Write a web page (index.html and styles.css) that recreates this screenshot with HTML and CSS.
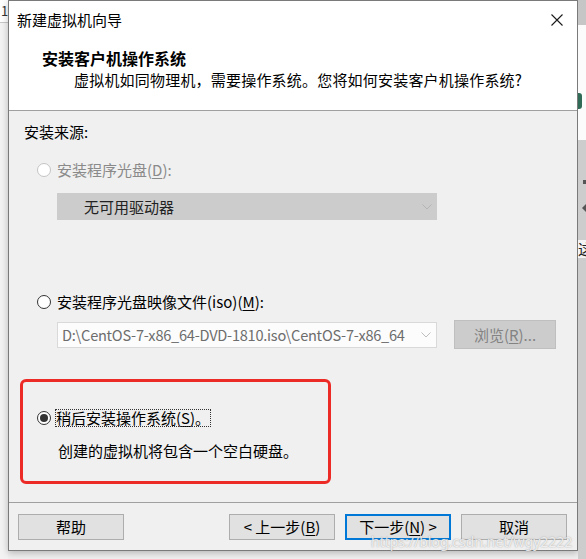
FILE: index.html
```html
<!DOCTYPE html>
<html lang="zh-CN">
<head>
<meta charset="utf-8">
<title>新建虚拟机向导</title>
<link rel="stylesheet" href="styles.css">
</head>
<body>
<div class="screen">
  <div class="side side-left">
    <div class="sl-top"><span class="sl-frag">1</span></div>
    <div class="sl-rest"></div>
  </div>

  <div class="center-col">
    <div class="dialog">
      <div class="titlebar">
        <span class="title">新建虚拟机向导</span>
        <svg class="close" width="12" height="12" viewBox="0 0 12 12"><path d="M0.5 0.5 L11.5 11.5 M11.5 0.5 L0.5 11.5" stroke="#1a1a1a" stroke-width="1.1" fill="none"/></svg>
      </div>
      <div class="header">
        <div class="h-title">安装客户机操作系统</div>
        <div class="h-sub">虚拟机如同物理机，需要操作系统。您将如何安装客户机操作系统?</div>
      </div>
      <div class="body">
        <div class="src-label">安装来源:</div>

        <div class="opt opt-d disabled">
          <span class="radio"></span>
          <span class="opt-text">安装程序光盘(<u>D</u>):</span>
        </div>
        <div class="combo combo-disabled">
          <span class="combo-text">无可用驱动器</span>
          <svg class="chev" width="10" height="6" viewBox="0 0 10 6"><polyline points="0.5,0.5 5,5 9.5,0.5" fill="none" stroke="#b4b4b4" stroke-width="1"/></svg>
        </div>

        <div class="opt opt-m">
          <span class="radio"></span>
          <span class="opt-text">安装程序光盘映像文件(iso)(<u>M</u>):</span>
        </div>
        <div class="iso-row">
          <div class="combo combo-iso">
            <span class="combo-text">D:\CentOS-7-x86_64-DVD-1810.iso\CentOS-7-x86_64</span>
            <svg class="chev" width="10" height="6" viewBox="0 0 10 6"><polyline points="0.5,0.5 5,5 9.5,0.5" fill="none" stroke="#bdbdbd" stroke-width="1"/></svg>
          </div>
          <div class="btn-browse">浏览(<u>R</u>)...</div>
        </div>

        <div class="mark-box">
          <div class="opt opt-s">
            <span class="radio checked"></span>
            <span class="opt-text focus">稍后安装操作系统(<u>S</u>)。</span>
          </div>
          <div class="desc">创建的虚拟机将包含一个空白硬盘。</div>
        </div>
      </div>
      <div class="footer">
        <div class="btn">帮助</div>
        <div class="btn btn-back">&lt; 上一步(<u>B</u>)</div>
        <div class="btn btn-next">下一步(<u>N</u>) &gt;</div>
        <div class="btn">取消</div>
      </div>
    </div>
  </div>

  <div class="side side-right">
    <div class="sr-top"></div>
    <div class="sr-white"><span class="sr-green"></span></div>
    <div class="sr-gray">
      <span class="sr-dot"></span>
      <span class="sr-tri"></span>
      <span class="sr-char">这</span>
    </div>
  </div>

  <div class="watermark">https://blog.csdn.net/wgy2222</div>
</div>
</body>
</html>
```

FILE: styles.css
```css
* { box-sizing: border-box; }

html, body {
  margin: 0;
  padding: 0;
  background: #f0f0f0;
}

body {
  font-family: "Noto Sans CJK SC", "Noto Sans", sans-serif;
  font-size: 15px;
  color: #000;
}

u { text-decoration: underline; text-underline-offset: 2px; }

.screen {
  position: relative;
  width: 586px;
  height: 559px;
  overflow: hidden;
  display: grid;
  grid-template-columns: 8px 570px 8px;
  background: #f0f0f0;
}

/* outside strips (other windows behind the dialog) */
.side { display: flex; flex-direction: column; overflow: hidden; }

.sl-top {
  height: 23px;
  background: #ffffff;
  border-bottom: 1px solid #c8c8c8;
}
.sl-frag {
  display: block;
  font-size: 13px;
  line-height: 13px;
  margin: 4px 0 0 1px;
  color: #333;
}
.sl-rest { flex: 1; background: #f3f3f3; }

.sr-top { height: 25px; background: #c6c6c6; }
.sr-white {
  height: 115px;
  background: #fbfbfb;
  display: flex;
  flex-direction: column;
  padding-top: 68px;
}
.sr-green {
  display: block;
  width: 4px;
  height: 16px;
  background: #2f6b56;
  border-radius: 0 3px 3px 0;
}
.sr-gray {
  flex: 1;
  background: #cdcdcd;
  display: flex;
  flex-direction: column;
  padding-top: 40px;
}
.sr-dot {
  display: block;
  width: 3px;
  height: 4px;
  margin-left: 5px;
  background: #555;
}
.sr-tri {
  display: block;
  width: 0;
  height: 0;
  margin: 20px 0 0 4px;
  border-top: 4px solid transparent;
  border-bottom: 4px solid transparent;
  border-right: 4px solid #555;
}
.sr-char {
  display: block;
  width: 8px;
  margin-top: 28px;
  font-size: 15px;
  line-height: 18px;
  color: #222;
  white-space: nowrap;
  overflow: hidden;
  background: #f4f4f4;
}

.center-col { display: flex; flex-direction: column; }

.dialog {
  width: 570px;
  height: 551px;
  border: 1px solid #7a7a7a;
  background: #f0f0f0;
  display: flex;
  flex-direction: column;
  box-shadow: 0 2px 7px rgba(0, 0, 0, 0.25);
}

.titlebar {
  height: 37px;
  background: #fff;
  display: flex;
  align-items: center;
  justify-content: space-between;
  padding: 1px 14px 0 8px;
}
.title { font-size: 15px; line-height: 20px; }
.close { display: block; margin-top: -1px; }

.header {
  height: 73px;
  background: #fff;
  border-bottom: 1px solid #a0a0a0;
  padding-top: 9px;
}
.h-title {
  font-weight: bold;
  font-size: 16px;
  line-height: 22px;
  padding-left: 33px;
}
.h-sub {
  margin-top: 1px;
  line-height: 20px;
  padding-left: 65px;
  letter-spacing: 0.2px;
}

.body {
  height: 392px;
  border-bottom: 1px solid #a0a0a0;
  display: flex;
  flex-direction: column;
  align-items: flex-start;
}

.src-label {
  margin: 11px 0 0 15px;
  line-height: 20px;
}

.opt {
  display: flex;
  align-items: center;
  height: 20px;
  gap: 6px;
  margin-left: 28px;
  line-height: 20px;
}
.opt-d { margin-top: 18px; }
.opt-m { margin-top: 72px; }
.disabled .opt-text { color: #8a8a8a; }

.radio {
  width: 14px;
  height: 14px;
  border: 1px solid #333;
  border-radius: 50%;
  background: #fff;
  display: flex;
  align-items: center;
  justify-content: center;
  flex: none;
}
.disabled .radio { border-color: #c4c4c4; }
.radio.checked::after {
  content: "";
  width: 8px;
  height: 8px;
  border-radius: 50%;
  background: #333;
}

.combo {
  width: 380px;
  display: flex;
  align-items: center;
  justify-content: space-between;
  flex: none;
}
.combo-disabled {
  height: 27px;
  margin: 13px 0 0 48px;
  background: #cccccc;
  padding: 0 5px 0 27px;
}
.combo-disabled .combo-text { color: #222; }
.chev { display: block; flex: none; }

.iso-row {
  display: flex;
  align-items: center;
  gap: 17px;
  margin: 8px 0 0 48px;
}
.combo-iso {
  height: 26px;
  background: #fcfcfc;
  border: 1px solid #d9d9d9;
  padding: 0 5px 0 4px;
}
.combo-iso .combo-text {
  color: #6d6d6d;
  white-space: nowrap;
  font-size: 14.6px;
  letter-spacing: -0.25px;
}

.btn-browse {
  width: 102px;
  height: 29px;
  background: #cccccc;
  border: 1px solid #bfbfbf;
  color: #838383;
  display: flex;
  align-items: center;
  justify-content: center;
}

.mark-box {
  width: 311px;
  height: 105px;
  margin: 30px 0 0 11px;
  border: 3px solid #ec2b27;
  border-radius: 6px;
  padding: 26px 0 0 14px;
}
.opt-s { margin-left: 0; gap: 4px; }
.focus {
  outline: 1px dotted #333;
  outline-offset: -1px;
  padding: 0 1px;
  line-height: 18px;
}
.desc {
  margin: 13px 0 0 21px;
  line-height: 20px;
}

.footer {
  height: 47px;
  display: flex;
  align-items: flex-start;
  gap: 10px;
  padding: 11px 10px 0 9px;
}
.btn {
  width: 106px;
  height: 26px;
  background: #e1e1e1;
  border: 1px solid #adadad;
  display: flex;
  align-items: center;
  justify-content: center;
  line-height: 20px;
}
.btn-back { margin-left: auto; }
.btn-next { border: 2px solid #0078d7; }

.watermark {
  position: absolute;
  left: 371px;
  top: 533px;
  font-family: "Noto Sans", sans-serif;
  font-size: 14px;
  line-height: 18px;
  color: rgba(255, 255, 255, 0.8);
  text-shadow: 0 0 1px rgba(110, 110, 110, 0.5), 0 0 2px rgba(140, 140, 140, 0.35);
  white-space: nowrap;
}
```
